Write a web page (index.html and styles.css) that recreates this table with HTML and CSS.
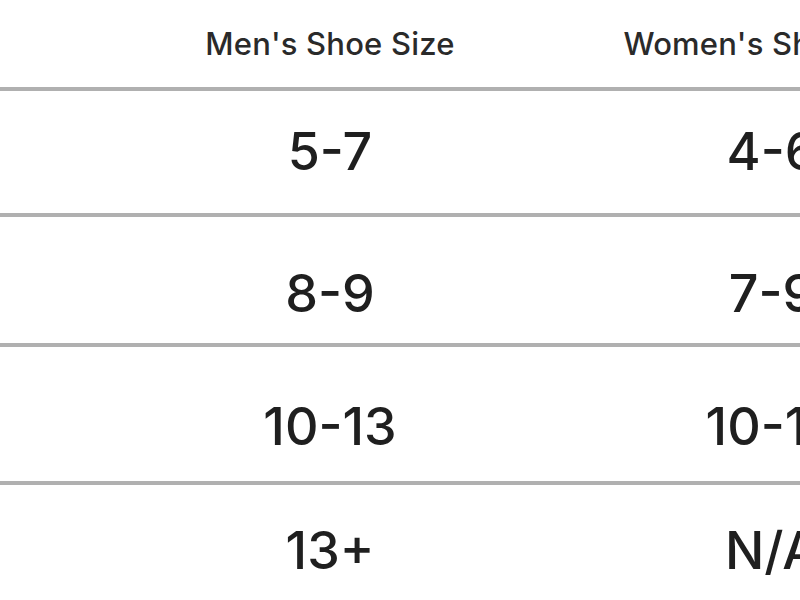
FILE: index.html
```html
<!DOCTYPE html>
<html lang="en">
<head>
<meta charset="utf-8">
<title>Shoe Size Chart</title>
<link rel="stylesheet" href="styles.css">
</head>
<body>
<div class="chart">
  <div class="row head">
    <div class="cell"></div>
    <div class="cell">Men's Shoe Size</div>
    <div class="cell">Women's Shoe Size</div>
  </div>
  <div class="row r1">
    <div class="cell">Small</div>
    <div class="cell">5-7</div>
    <div class="cell">4-6</div>
  </div>
  <div class="row r2">
    <div class="cell">Medium</div>
    <div class="cell">8-9</div>
    <div class="cell">7-9</div>
  </div>
  <div class="row r3">
    <div class="cell">Large</div>
    <div class="cell">10-13</div>
    <div class="cell">10-12</div>
  </div>
  <div class="row r4">
    <div class="cell">X-Large</div>
    <div class="cell">13+</div>
    <div class="cell">N/A</div>
  </div>
</div>
</body>
</html>
```
FILE: styles.css
```css
html, body {
  margin: 0;
  padding: 0;
  background: #ffffff;
  overflow: hidden;
}
body {
  width: 800px;
  height: 600px;
  font-family: "Inter", "Liberation Sans", sans-serif;
  color: #1f1f1f;
}
.chart {
  width: 800px;
  overflow: hidden;
}
.row {
  display: grid;
  grid-template-columns: 109px 442px 442px;
  width: 993px;
  box-sizing: border-box;
  border-bottom: 4px solid #b0b0b0;
}
.row .cell {
  text-align: center;
  white-space: nowrap;
}
.row .cell:first-child {
  visibility: hidden;
  overflow: hidden;
}
.head {
  height: 91px;
  padding-top: 28px;
  font-size: 31px;
  line-height: 31px;
  font-weight: 500;
  letter-spacing: 0.2px;
  color: #2a2a2a;
}
.r1, .r2, .r3, .r4 {
  font-size: 52px;
  line-height: 52px;
  font-weight: 500;
}
.r1 { height: 126px; padding-top: 35px; }
.r2 { height: 130px; padding-top: 51px; }
.r3 { height: 138px; padding-top: 54px; }
.r4 { height: 115px; padding-top: 40px; border-bottom: none; }
```
